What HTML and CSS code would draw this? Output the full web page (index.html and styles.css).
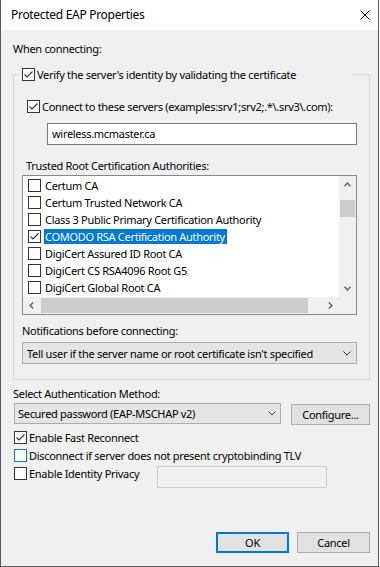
FILE: index.html
```html
<!DOCTYPE html>
<html lang="en">
<head>
    <meta charset="UTF-8">
    <title>Protected EAP Properties</title>
    <link rel="stylesheet" href="styles.css">
</head>
<body>
    <div class="window">
        <div class="titlebar">
            <span class="title">Protected EAP Properties</span>
            <svg class="close" width="10" height="10" viewBox="0 0 10 10"><path d="M0.5 0.5L9.5 9.5M9.5 0.5L0.5 9.5" stroke="#000" stroke-width="1" fill="none"/></svg>
        </div>
        <div class="content">
            <div class="label when">When connecting:</div>
            <fieldset class="group">
                <legend class="check-row verify">
                    <span class="box"><svg width="11" height="11" viewBox="0 0 11 11"><polyline points="1.5,5.5 4,8 9.5,2.5" /></svg></span>
                    <span>Verify the server's identity by validating the certificate</span>
                </legend>
                <div class="check-row servers">
                    <span class="box"><svg width="11" height="11" viewBox="0 0 11 11"><polyline points="1.5,5.5 4,8 9.5,2.5" /></svg></span>
                    <span>Connect to these servers (examples:srv1;srv2;.*\.srv3\.com):</span>
                </div>
                <div class="textbox server-name">wireless.mcmaster.ca</div>
                <div class="label trusted">Trusted Root Certification Authorities:</div>
                <div class="listbox">
                    <div class="list-items">
                        <div class="list-row"><span class="box"></span><span class="item-text">Certum CA</span></div>
                        <div class="list-row"><span class="box"></span><span class="item-text">Certum Trusted Network CA</span></div>
                        <div class="list-row"><span class="box"></span><span class="item-text">Class 3 Public Primary Certification Authority</span></div>
                        <div class="list-row"><span class="box"><svg width="11" height="11" viewBox="0 0 11 11"><polyline points="1.5,5.5 4,8 9.5,2.5" /></svg></span><span class="item-text selected">COMODO RSA Certification Authority</span></div>
                        <div class="list-row"><span class="box"></span><span class="item-text">DigiCert Assured ID Root CA</span></div>
                        <div class="list-row"><span class="box"></span><span class="item-text">DigiCert CS RSA4096 Root G5</span></div>
                        <div class="list-row"><span class="box"></span><span class="item-text">DigiCert Global Root CA</span></div>
                    </div>
                    <div class="vscroll">
                        <div class="arrow"><svg width="7" height="5" viewBox="0 0 7 5"><polyline points="0.5,4.2 3.5,1 6.5,4.2" /></svg></div>
                        <div class="track"><div class="thumb"></div></div>
                        <div class="arrow"><svg width="7" height="5" viewBox="0 0 7 5"><polyline points="0.5,0.8 3.5,4 6.5,0.8" /></svg></div>
                    </div>
                    <div class="hscroll">
                        <div class="arrow"><svg width="5" height="7" viewBox="0 0 5 7"><polyline points="4.2,0.5 1,3.5 4.2,6.5" /></svg></div>
                        <div class="track"><div class="thumb"></div></div>
                        <div class="arrow"><svg width="5" height="7" viewBox="0 0 5 7"><polyline points="0.8,0.5 4,3.5 0.8,6.5" /></svg></div>
                    </div>
                    <div class="corner"></div>
                </div>
                <div class="label notify">Notifications before connecting:</div>
                <div class="combo notify-combo">
                    <span>Tell user if the server name or root certificate isn't specified</span>
                    <svg width="8" height="5" viewBox="0 0 8 5"><polyline points="0.5,0.5 4,4 7.5,0.5" /></svg>
                </div>
            </fieldset>
            <div class="label auth">Select Authentication Method:</div>
            <div class="auth-row">
                <div class="combo auth-combo">
                    <span>Secured password (EAP-MSCHAP v2)</span>
                    <svg width="8" height="5" viewBox="0 0 8 5"><polyline points="0.5,0.5 4,4 7.5,0.5" /></svg>
                </div>
                <div class="button configure">Configure...</div>
            </div>
            <div class="check-row option fast">
                <span class="box"><svg width="11" height="11" viewBox="0 0 11 11"><polyline points="1.5,5.5 4,8 9.5,2.5" /></svg></span>
                <span>Enable Fast Reconnect</span>
            </div>
            <div class="check-row option disconnect">
                <span class="box focus"></span>
                <span>Disconnect if server does not present cryptobinding TLV</span>
            </div>
            <div class="privacy-row">
                <div class="check-row option privacy">
                    <span class="box"></span>
                    <span>Enable Identity Privacy</span>
                </div>
                <div class="textbox disabled"></div>
            </div>
            <div class="buttons">
                <div class="button default">OK</div>
                <div class="button">Cancel</div>
            </div>
        </div>
    </div>
</body>
</html>
```

FILE: styles.css
```css
* {
    box-sizing: border-box;
}
body {
    margin: 0;
    background-color: #ffffff;
    font-family: "Noto Sans", "Liberation Sans", sans-serif;
    font-size: 11px;
    letter-spacing: -0.3px;
    color: #000;
}
.window {
    width: 379px;
    height: 567px;
    display: flex;
    flex-direction: column;
    background-color: #f0f0f0;
    border: 1px solid #5a5a5a;
    border-top: none;
}
.titlebar {
    height: 30px;
    flex: none;
    display: flex;
    align-items: center;
    justify-content: space-between;
    padding: 0 8px 0 10px;
    background-color: #fff;
}
.title {
    font-size: 12px;
    line-height: 16px;
}
.close {
    display: block;
}
.content {
    flex: 1;
    display: flex;
    flex-direction: column;
    padding: 0 8px 13px 12px;
}
.label {
    line-height: 15px;
    white-space: nowrap;
}
.when {
    margin-top: 11px;
}
.group {
    margin: 12px 0 0 0;
    padding: 0 12px 15px 8px;
    border: 1px solid #dcdcdc;
    min-width: 0;
}
.check-row {
    display: flex;
    align-items: center;
    height: 13px;
    line-height: 13px;
    white-space: nowrap;
    gap: 2px;
}
.box {
    width: 13px;
    height: 13px;
    flex: none;
    border: 1px solid #333;
    background-color: #fff;
    display: flex;
}
.box svg {
    display: block;
}
.box polyline {
    fill: none;
    stroke: #333;
    stroke-width: 1.1;
}
.box.focus {
    border-color: #0078d7;
}
.verify {
    width: 332px;
    padding: 0 0 0 2px;
    margin-left: -2px;
}
.servers {
    margin: 19px 0 0 5px;
}
.textbox {
    background-color: #fff;
    border: 1px solid #7a7a7a;
    height: 22px;
    line-height: 20px;
    padding-left: 4px;
}
.server-name {
    width: 310px;
    margin: 10px 0 0 25px;
}
.trusted {
    margin: 13px 0 0 4px;
}
.listbox {
    margin-top: 2px;
    width: 335px;
    height: 140px;
    border: 1px solid #828790;
    display: grid;
    grid-template-columns: 316px 17px;
    grid-template-rows: 121px 17px;
    background-color: #fff;
}
.list-items {
    padding: 1px 0 0 5px;
    overflow: hidden;
}
.list-row {
    height: 17px;
    display: flex;
    align-items: center;
    white-space: nowrap;
}
.item-text {
    margin-left: 3px;
    padding: 0 2px 0 1px;
    line-height: 15px;
}
.item-text.selected {
    background-color: #0078d7;
    color: #fff;
}
.vscroll,
.hscroll,
.corner {
    background-color: #f0f0f0;
}
.vscroll {
    display: flex;
    flex-direction: column;
}
.hscroll {
    display: flex;
}
.arrow {
    width: 17px;
    height: 17px;
    flex: none;
    display: flex;
    align-items: center;
    justify-content: center;
}
.arrow polyline {
    fill: none;
    stroke: #606060;
    stroke-width: 1.4;
}
.track {
    flex: 1;
}
.vscroll .thumb {
    margin: 7px 1px 0 1px;
    height: 17px;
    background-color: #cdcdcd;
}
.hscroll .thumb {
    margin: 1px 0 0 1px;
    width: 267px;
    height: 15px;
    background-color: #cdcdcd;
}
.notify {
    margin: 8px 0 0 0;
}
.combo {
    display: flex;
    align-items: center;
    justify-content: space-between;
    background-color: #e5e5e5;
    border: 1px solid #adadad;
    white-space: nowrap;
}
.combo polyline {
    fill: none;
    stroke: #333;
    stroke-width: 1;
}
.notify-combo {
    margin-top: 4px;
    width: 335px;
    height: 22px;
    padding: 0 5px 0 4px;
}
.auth {
    margin-top: 6px;
}
.auth-row {
    display: flex;
    align-items: flex-start;
    justify-content: space-between;
    margin-top: 2px;
}
.auth-combo {
    margin-left: 1px;
    width: 267px;
    height: 21px;
    padding: 0 4px 0 3px;
}
.button {
    width: 73px;
    height: 21px;
    display: flex;
    align-items: center;
    justify-content: center;
    background-color: #e1e1e1;
    border: 1px solid #adadad;
}
.configure {
    width: 79px;
    margin-top: 1px;
}
.option {
    margin-left: 1px;
}
.fast {
    margin-top: 6px;
}
.disconnect {
    margin-top: 5px;
}
.privacy-row {
    display: flex;
    align-items: flex-start;
    margin-top: 4px;
}
.privacy {
    flex: 0 0 143px;
    margin-top: 1px;
}
.textbox.disabled {
    width: 170px;
    background-color: #f0f0f0;
    border-color: #cccccc;
}
.buttons {
    margin-top: auto;
    display: flex;
    justify-content: flex-end;
    gap: 8px;
}
.button.default {
    border: 2px solid #0078d7;
}
```
